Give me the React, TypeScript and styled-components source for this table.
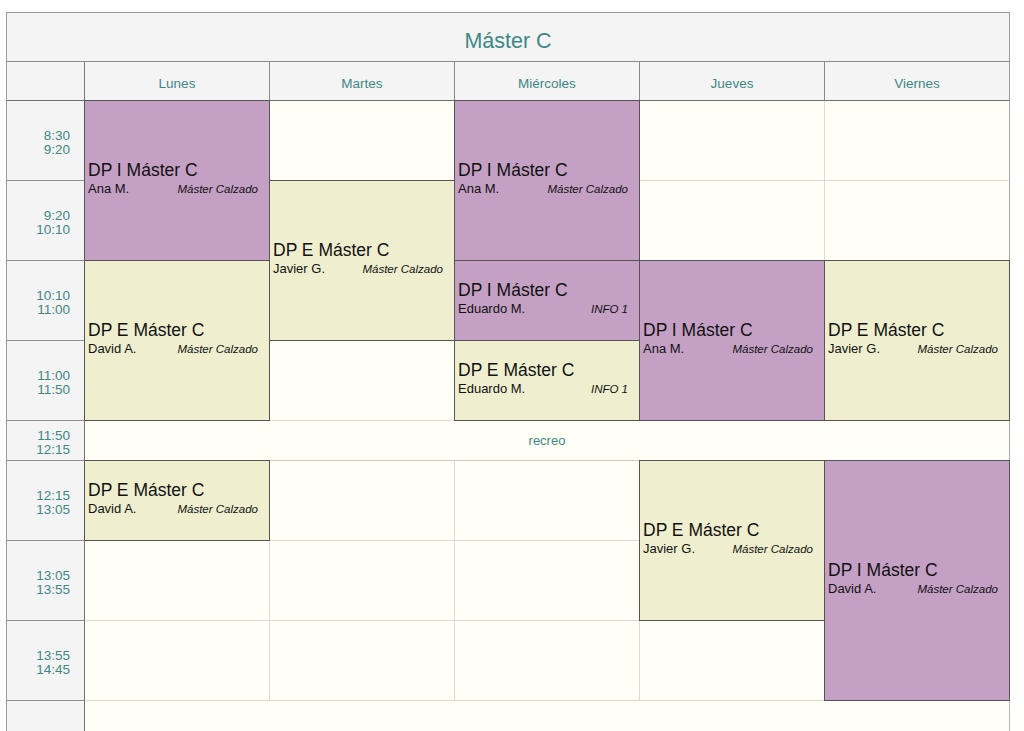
import React, { FunctionComponent } from 'react';
import styled, { createGlobalStyle } from 'styled-components';

type Kind = 'I' | 'E';

interface Lesson {
  col: number;
  row: number;
  span: number;
  kind: Kind;
  teacher: string;
  room: string;
}

const DAYS = ['Lunes', 'Martes', 'Miércoles', 'Jueves', 'Viernes'];

// grid row 7 is the break, rows 3-6 and 8-10 are the slots
const SLOTS = [
  { row: 3, from: '8:30', to: '9:20' },
  { row: 4, from: '9:20', to: '10:10' },
  { row: 5, from: '10:10', to: '11:00' },
  { row: 6, from: '11:00', to: '11:50' },
  { row: 8, from: '12:15', to: '13:05' },
  { row: 9, from: '13:05', to: '13:55' },
  { row: 10, from: '13:55', to: '14:45' },
];

const LESSONS: Lesson[] = [
  { col: 2, row: 3, span: 2, kind: 'I', teacher: 'Ana M.', room: 'Máster Calzado' },
  { col: 2, row: 5, span: 2, kind: 'E', teacher: 'David A.', room: 'Máster Calzado' },
  { col: 2, row: 8, span: 1, kind: 'E', teacher: 'David A.', room: 'Máster Calzado' },
  { col: 3, row: 4, span: 2, kind: 'E', teacher: 'Javier G.', room: 'Máster Calzado' },
  { col: 4, row: 3, span: 2, kind: 'I', teacher: 'Ana M.', room: 'Máster Calzado' },
  { col: 4, row: 5, span: 1, kind: 'I', teacher: 'Eduardo M.', room: 'INFO 1' },
  { col: 4, row: 6, span: 1, kind: 'E', teacher: 'Eduardo M.', room: 'INFO 1' },
  { col: 5, row: 5, span: 2, kind: 'I', teacher: 'Ana M.', room: 'Máster Calzado' },
  { col: 5, row: 8, span: 2, kind: 'E', teacher: 'Javier G.', room: 'Máster Calzado' },
  { col: 6, row: 5, span: 2, kind: 'E', teacher: 'Javier G.', room: 'Máster Calzado' },
  { col: 6, row: 8, span: 3, kind: 'I', teacher: 'David A.', room: 'Máster Calzado' },
];

const isTaken = (col: number, row: number) =>
  LESSONS.some((l) => l.col === col && row >= l.row && row < l.row + l.span);

const App: FunctionComponent = () => {
  const empties: { col: number; row: number }[] = [];
  for (let col = 2; col <= 6; col += 1) {
    SLOTS.forEach(({ row }) => {
      if (!isTaken(col, row)) empties.push({ col, row });
    });
  }

  return (
    <Page>
      <GlobalStyle />
      <Grid>
        <Title>Máster C</Title>
        <Corner />
        {DAYS.map((day, i) => (
          <DayHead key={day} $last={i === DAYS.length - 1}>
            {day}
          </DayHead>
        ))}

        {SLOTS.map((s) => (
          <TimeCell key={s.row} $row={s.row}>
            <span>{s.from}</span>
            <span>{s.to}</span>
          </TimeCell>
        ))}
        <TimeCell $row={7}>
          <span>11:50</span>
          <span>12:15</span>
        </TimeCell>
        <Break>recreo</Break>
        <TimeCell $row={11} />
        <Tail />

        {empties.map((e) => (
          <Empty key={`${e.col}-${e.row}`} $col={e.col} $row={e.row} />
        ))}

        {LESSONS.map((l) => (
          <Block
            key={`${l.col}-${l.row}`}
            $col={l.col}
            $row={l.row}
            $span={l.span}
            $kind={l.kind}
          >
            <Subject>DP {l.kind} Máster C</Subject>
            <Meta>
              <span>{l.teacher}</span>
              <Room>{l.room}</Room>
            </Meta>
          </Block>
        ))}
      </Grid>
    </Page>
  );
};

const GlobalStyle = createGlobalStyle`
  html, body {
    margin: 0;
    background: #ffffff;
    overflow: hidden;
  }
`;

const Page = styled.div`
  padding: 12px 0 0 6px;
  font-family: 'Liberation Sans', Arial, Helvetica, sans-serif;
`;

const Grid = styled.div`
  display: grid;
  grid-template-columns: 78px repeat(5, 185px);
  grid-template-rows: 49px 39px repeat(4, 80px) 40px repeat(3, 80px) 40px;
  width: max-content;
  border-left: 1px solid #9a9a9a;
  border-top: 1px solid #9a9a9a;
`;

const Title = styled.div`
  grid-column: 1 / -1;
  grid-row: 1;
  display: flex;
  align-items: center;
  justify-content: center;
  padding-top: 8px;
  background: #f4f4f4;
  border-right: 1px solid #9a9a9a;
  border-bottom: 1px solid #8a8a8a;
  color: #3f8787;
  font-size: 21.5px;
`;

const Corner = styled.div`
  grid-column: 1;
  grid-row: 2;
  background: #f4f4f4;
  border-right: 1px solid #7a7a7a;
  border-bottom: 1px solid #6f6f6f;
`;

const DayHead = styled.div<{ $last: boolean }>`
  grid-row: 2;
  display: flex;
  align-items: center;
  justify-content: center;
  padding-top: 5px;
  background: #f4f4f4;
  border-right: 1px solid ${(p) => (p.$last ? '#9a9a9a' : '#8a8a8a')};
  border-bottom: 1px solid #6f6f6f;
  color: #3f8787;
  font-size: 13.5px;
`;

const TimeCell = styled.div<{ $row: number }>`
  grid-column: 1;
  grid-row: ${(p) => p.$row};
  display: flex;
  flex-direction: column;
  align-items: flex-end;
  justify-content: center;
  padding: 5px 14px 0 0;
  background: #f4f4f4;
  border-right: 1px solid #6f6f6f;
  border-bottom: 1px solid #8f8f8f;
  color: #3f8787;
  font-size: 13.5px;
  line-height: 14px;
`;

const Empty = styled.div<{ $col: number; $row: number }>`
  grid-column: ${(p) => p.$col};
  grid-row: ${(p) => p.$row};
  background: #fffff6;
  border-right: 1px solid ${(p) => (p.$col === 6 ? '#a8a8a8' : '#dadada')};
  border-bottom: 1px solid #dadada;
`;

const Break = styled.div`
  grid-column: 2 / -1;
  grid-row: 7;
  display: flex;
  align-items: center;
  justify-content: center;
  background: #fffff6;
  border-right: 1px solid #a8a8a8;
  border-bottom: 1px solid #c8c8c8;
  color: #3f8787;
  font-size: 13px;
`;

const Tail = styled.div`
  grid-column: 2 / -1;
  grid-row: 11;
  background: #fffff6;
  border-right: 1px solid #b8b8b8;
`;

const Block = styled.div<{ $col: number; $row: number; $span: number; $kind: Kind }>`
  grid-column: ${(p) => p.$col};
  grid-row: ${(p) => p.$row} / span ${(p) => p.$span};
  position: relative;
  z-index: 1;
  margin: -1px 0 0 -1px;
  display: flex;
  flex-direction: column;
  justify-content: center;
  padding: 0 11px 4px 3px;
  background: ${(p) => (p.$kind === 'I' ? '#c4a0c4' : '#efefcf')};
  border: 1px solid #555555;
  color: #111111;
`;

const Subject = styled.div`
  font-size: 17.5px;
  line-height: 21px;
`;

const Meta = styled.div`
  display: flex;
  justify-content: space-between;
  align-items: baseline;
  font-size: 13px;
  line-height: 15px;
`;

const Room = styled.span`
  font-size: 11.5px;
  font-style: italic;
`;

export default App;
